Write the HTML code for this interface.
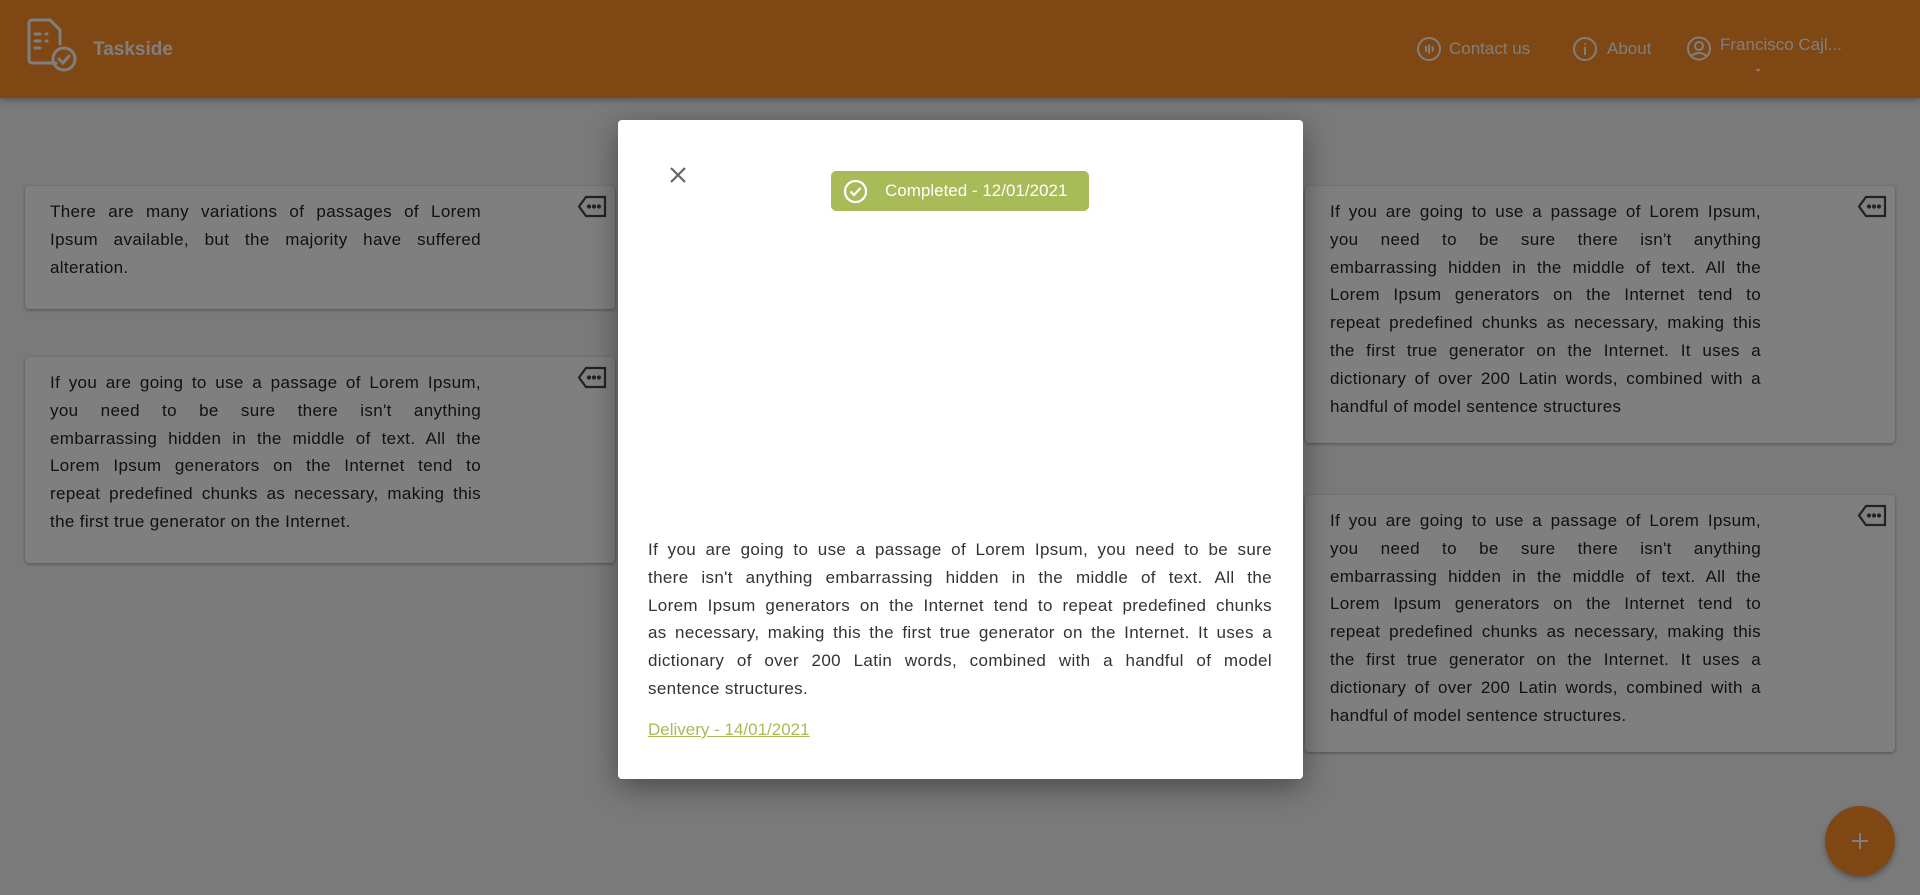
<!DOCTYPE html>
<html><head><meta charset="utf-8"><style>
*{box-sizing:border-box;margin:0;padding:0}
body{width:1920px;height:895px;overflow:hidden;background:#f4f4f4;font-family:"Liberation Sans",sans-serif;position:relative}
.hdr{position:absolute;left:0;top:0;width:1920px;height:98px;background:#ff8e29;box-shadow:0 2px 6px rgba(0,0,0,.3)}
.hdr .t{position:absolute;left:93px;top:39px;font-size:19px;font-weight:bold;color:#fff}
.nav{position:absolute;top:39px;font-size:17px;color:#fff}
.card{position:absolute;background:#fff;border-radius:4px;box-shadow:0 1px 3px rgba(0,0,0,.35);color:#222;font-size:17px;line-height:27.8px;letter-spacing:0.35px}
.card p{position:absolute;width:431px}
.card p span{display:block;text-align:justify;text-align-last:justify}
.card p span.l{text-align-last:left}
.tag{position:absolute;top:9px;right:8px}
.ov{position:absolute;left:0;top:0;width:1920px;height:895px;background:rgba(0,0,0,.5)}
.modal{position:absolute;left:618px;top:120px;width:685px;height:659px;background:#fff;border-radius:4px;box-shadow:0 8px 30px rgba(0,0,0,.4)}
.badge{position:absolute;left:213px;top:51px;width:258px;height:40px;background:#a9bb59;border-radius:5px;color:#fff;font-size:17px;line-height:40px;padding-left:54px}
.mt{position:absolute;left:30px;top:416px;width:624px;font-size:17px;line-height:27.8px;color:#333;letter-spacing:0.35px}
.mt span{display:block;text-align:justify;text-align-last:justify}
.mt span.l{text-align-last:left}
.dl{position:absolute;left:30px;top:600px;font-size:17px;color:#a9bb59;text-decoration:underline}
.fab{position:absolute;left:1825px;top:806px;width:70px;height:70px;border-radius:50%;background:#ff8e29;box-shadow:0 3px 6px rgba(0,0,0,.3)}
</style></head><body>
<div class="hdr">
<svg style="position:absolute;left:26px;top:17px" width="54" height="56" viewBox="0 0 54 56" fill="none" stroke="#fff" stroke-width="3" stroke-linecap="round"><path d="M30 46H6a3 3 0 0 1-3-3V6a3 3 0 0 1 3-3h18l10 10v14"/><path d="M9 17h5M9 24h5M9 31h5M20 17h1M20 24h1"/><circle cx="38" cy="42" r="11"/><path d="M33 42l4 4 6-7"/></svg>
<div class="t">Taskside</div>
<svg style="position:absolute;left:1416px;top:36px" width="26" height="26" viewBox="0 0 26 26" fill="none" stroke="#fff" stroke-width="2"><circle cx="13" cy="13" r="11"/><path d="M10 10v6M13 8.5v9M16 10.5a4 4 0 0 1 0 5"/></svg>
<div class="nav" style="left:1449px">Contact us</div>
<svg style="position:absolute;left:1572px;top:36px" width="26" height="26" viewBox="0 0 26 26" fill="none" stroke="#fff" stroke-width="2"><circle cx="13" cy="13" r="11"/><path d="M13 11v8M13 7v1.5"/></svg>
<div class="nav" style="left:1607px">About</div>
<svg style="position:absolute;left:1686px;top:35px" width="26" height="27" viewBox="0 0 26 26" fill="none" stroke="#fff" stroke-width="2"><circle cx="13" cy="13" r="11"/><circle cx="13" cy="10.5" r="4"/><path d="M5.5 20.5c4-4 11-4 15 0"/></svg>
<div class="nav" style="left:1720px;top:35px">Francisco Cajl...</div>
<div style="position:absolute;left:1755px;top:69px;border:3px solid transparent;border-top:3px solid #fff"></div>
</div>

<div class="card" style="left:25px;top:186px;width:590px;height:123px"><p style="left:25px;top:12px"><span>There are many variations of passages of Lorem</span><span>Ipsum available, but the majority have suffered</span><span class="l">alteration.</span></p>
<svg class="tag" width="30" height="23" viewBox="0 0 30 23" fill="none" stroke="#444" stroke-width="2.2"><path d="M28 2H9L2 11.5 9 21h19z"/><circle cx="12" cy="11.5" r="1" fill="#444"/><circle cx="17" cy="11.5" r="1" fill="#444"/><circle cx="22" cy="11.5" r="1" fill="#444"/></svg></div>

<div class="card" style="left:25px;top:357px;width:590px;height:206px"><p style="left:25px;top:12px"><span>If you are going to use a passage of Lorem Ipsum,</span><span>you need to be sure there isn't anything</span><span>embarrassing hidden in the middle of text. All the</span><span>Lorem Ipsum generators on the Internet tend to</span><span>repeat predefined chunks as necessary, making this</span><span class="l">the first true generator on the Internet.</span></p>
<svg class="tag" width="30" height="23" viewBox="0 0 30 23" fill="none" stroke="#444" stroke-width="2.2"><path d="M28 2H9L2 11.5 9 21h19z"/><circle cx="12" cy="11.5" r="1" fill="#444"/><circle cx="17" cy="11.5" r="1" fill="#444"/><circle cx="22" cy="11.5" r="1" fill="#444"/></svg></div>

<div class="card" style="left:1305px;top:186px;width:590px;height:257px"><p style="left:25px;top:12px"><span>If you are going to use a passage of Lorem Ipsum,</span><span>you need to be sure there isn't anything</span><span>embarrassing hidden in the middle of text. All the</span><span>Lorem Ipsum generators on the Internet tend to</span><span>repeat predefined chunks as necessary, making this</span><span>the first true generator on the Internet. It uses a</span><span>dictionary of over 200 Latin words, combined with a</span><span class="l">handful of model sentence structures</span></p>
<svg class="tag" width="30" height="23" viewBox="0 0 30 23" fill="none" stroke="#444" stroke-width="2.2"><path d="M28 2H9L2 11.5 9 21h19z"/><circle cx="12" cy="11.5" r="1" fill="#444"/><circle cx="17" cy="11.5" r="1" fill="#444"/><circle cx="22" cy="11.5" r="1" fill="#444"/></svg></div>

<div class="card" style="left:1305px;top:495px;width:590px;height:257px"><p style="left:25px;top:12px"><span>If you are going to use a passage of Lorem Ipsum,</span><span>you need to be sure there isn't anything</span><span>embarrassing hidden in the middle of text. All the</span><span>Lorem Ipsum generators on the Internet tend to</span><span>repeat predefined chunks as necessary, making this</span><span>the first true generator on the Internet. It uses a</span><span>dictionary of over 200 Latin words, combined with a</span><span class="l">handful of model sentence structures.</span></p>
<svg class="tag" width="30" height="23" viewBox="0 0 30 23" fill="none" stroke="#444" stroke-width="2.2"><path d="M28 2H9L2 11.5 9 21h19z"/><circle cx="12" cy="11.5" r="1" fill="#444"/><circle cx="17" cy="11.5" r="1" fill="#444"/><circle cx="22" cy="11.5" r="1" fill="#444"/></svg></div>

<div class="fab"><svg style="position:absolute;left:25px;top:25px" width="20" height="20" viewBox="0 0 20 20" stroke="#fff" stroke-width="2"><path d="M10 2v16M2 10h16"/></svg></div>

<div class="ov"></div>

<div class="modal">
<svg style="position:absolute;left:50px;top:45px" width="20" height="20" viewBox="0 0 20 20" stroke="#666" stroke-width="2.2"><path d="M3 3l14 14M17 3L3 17"/></svg>
<div class="badge"><svg style="position:absolute;left:12px;top:8px" width="25" height="25" viewBox="0 0 25 25" fill="none" stroke="#fff" stroke-width="2.2"><circle cx="12.5" cy="12.5" r="10.5"/><path d="M7.5 12.5l3.5 3.5 6.5-7"/></svg>Completed - 12/01/2021</div>
<div class="mt"><span>If you are going to use a passage of Lorem Ipsum, you need to be sure</span><span>there isn't anything embarrassing hidden in the middle of text. All the</span><span>Lorem Ipsum generators on the Internet tend to repeat predefined chunks</span><span>as necessary, making this the first true generator on the Internet. It uses a</span><span>dictionary of over 200 Latin words, combined with a handful of model</span><span class="l">sentence structures.</span></div>
<div class="dl">Delivery - 14/01/2021</div>
</div>
</body></html>
